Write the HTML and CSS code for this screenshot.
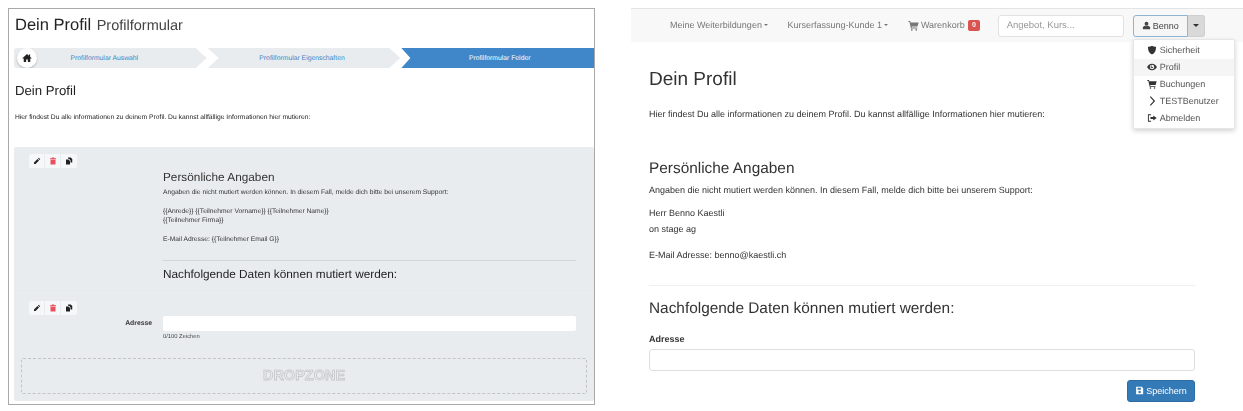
FILE: index.html
```html
<!DOCTYPE html>
<html lang="de">
<head>
<meta charset="utf-8">
<title>Dein Profil</title>
<link rel="stylesheet" href="styles.css">
</head>
<body>
<svg class="sprite" aria-hidden="true">
  <symbol id="i-home" viewBox="0 0 16 16"><path d="M8 1.5 0.6 8.2 1.6 9.3 2.8 8.2V14.5H6.6V10.4H9.4V14.5H13.2V8.2L14.4 9.3 15.4 8.2 13 6V2.2H11V4.2Z"/></symbol>
  <symbol id="i-pencil" viewBox="0 0 16 16"><path d="M11.5 1.5 14.5 4.5 13 6 10 3ZM9 4 12 7 5 14H2V11Z"/></symbol>
  <symbol id="i-trash" viewBox="0 0 16 16"><path d="M5.5 1H10.5V2.5H14V4.5H2V2.5H5.5ZM3 5.5H13V15H3Z"/></symbol>
  <symbol id="i-copy" viewBox="0 0 16 16"><path d="M6 1H11.5L14.5 4V11H11V6.5L8 3.5H6ZM2 5H7L10 8V15H2Z"/></symbol>
  <symbol id="i-cart" viewBox="0 0 16 16"><path d="M0.5 1.5H3.2L3.7 3.5H15.5L13.8 9.5H5.2L5.5 11H13.5V12.5H4.2L2.2 3H0.5ZM5.5 13A1.3 1.3 0 1 1 5.5 15.6 1.3 1.3 0 0 1 5.5 13ZM12 13A1.3 1.3 0 1 1 12 15.6 1.3 1.3 0 0 1 12 13Z"/></symbol>
  <symbol id="i-user" viewBox="0 0 16 16"><path d="M8 1.5A3.4 3.4 0 1 1 8 8.3 3.4 3.4 0 0 1 8 1.5ZM5.5 8.6C6.8 9.5 9.2 9.5 10.5 8.6 12.5 9 14.5 10.2 14.5 12.2V14.5H1.5V12.2C1.5 10.2 3.5 9 5.5 8.6Z"/></symbol>
  <symbol id="i-shield" viewBox="0 0 16 16"><path d="M8 1C10 2.2 12 2.6 14.5 2.6 14.5 8.5 13 12.5 8 15.2 3 12.5 1.5 8.5 1.5 2.6 4 2.6 6 2.2 8 1Z"/></symbol>
  <symbol id="i-eye" viewBox="0 0 16 16"><path fill-rule="evenodd" d="M8 2.8C11.6 2.8 14.6 5.2 15.8 8 14.6 10.8 11.6 13.2 8 13.2 4.4 13.2 1.4 10.8 0.2 8 1.4 5.2 4.4 2.8 8 2.8ZM8 4.4A3.6 3.6 0 1 0 8 11.6 3.6 3.6 0 0 0 8 4.4ZM8 5.8 6.4 8.6 9.8 7.4A2 2 0 1 1 8 5.8Z"/></symbol>
  <symbol id="i-chevron" viewBox="0 0 16 16"><path d="M4.6 1.6 6 0.4 13 8 6 15.6 4.6 14.4 10.4 8Z"/></symbol>
  <symbol id="i-out" viewBox="0 0 16 16"><path d="M6.5 2V3.5H3V12.5H6.5V14H1.5V2ZM10 4 15.5 8 10 12V9.6H5.5V6.4H10Z"/></symbol>
  <symbol id="i-save" viewBox="0 0 16 16"><path fill-rule="evenodd" d="M2 1.5H12L14.5 4V14.5H2ZM4.5 3V6.5H10.5V3ZM8.2 8.5A2.2 2.2 0 1 0 8.2 12.9 2.2 2.2 0 0 0 8.2 8.5Z"/></symbol>
</svg>

<div class="screen">
  <section class="editor">
    <h1 class="ed-title">Dein Profil <small>Profilformular</small></h1>
    <nav class="steps">
      <a class="step step-first"><span class="home"><svg class="ic"><use href="#i-home"/></svg></span><span class="step-label">Profilformular Auswahl</span></a>
      <a class="step step-mid"><span class="step-label">Profilformular Eigenschaften</span></a>
      <a class="step step-active"><span class="step-label">Profilformular Felder</span></a>
    </nav>
    <h2 class="ed-h2">Dein Profil</h2>
    <p class="ed-intro">Hier findest Du alle informationen zu deinem Profil. Du kannst allfällige Informationen hier mutieren:</p>
    <div class="canvas">
      <div class="block block-text">
        <div class="tools"><span class="tool"><svg class="ic"><use href="#i-pencil"/></svg></span><span class="tool tool-red"><svg class="ic"><use href="#i-trash"/></svg></span><span class="tool"><svg class="ic"><use href="#i-copy"/></svg></span></div>
        <div class="block-body">
          <h3 class="ed-h3">Persönliche Angaben</h3>
          <p class="ed-p">Angaben die nicht mutiert werden können. In diesem Fall, melde dich bitte bei unserem Support:</p>
          <p class="ed-p ed-gap">{{Anrede}} {{Teilnehmer Vorname}} {{Teilnehmer Name}}<br>{{Teilnehmer Firma}}</p>
          <p class="ed-p ed-gap">E-Mail Adresse: {{Teilnehmer Email G}}</p>
          <hr class="ed-hr">
          <h3 class="ed-h3b">Nachfolgende Daten können mutiert werden:</h3>
        </div>
      </div>
      <div class="block block-field">
        <div class="tools"><span class="tool"><svg class="ic"><use href="#i-pencil"/></svg></span><span class="tool tool-red"><svg class="ic"><use href="#i-trash"/></svg></span><span class="tool"><svg class="ic"><use href="#i-copy"/></svg></span></div>
        <div class="field-row">
          <label class="ed-label">Adresse</label>
          <div class="ed-input"></div>
        </div>
        <div class="ed-count">0/100 Zeichen</div>
      </div>
      <div class="dropwrap"><div class="dropzone">DROPZONE</div></div>
    </div>
  </section>

  <section class="site">
    <header class="navbar">
      <a class="nav-item nav-first">Meine Weiterbildungen<i class="caret"></i></a>
      <a class="nav-item nav-second">Kurserfassung-Kunde 1<i class="caret"></i></a>
      <a class="nav-item nav-third"><svg class="ic ic-cart"><use href="#i-cart"/></svg>Warenkorb<span class="badge">0</span></a>
      <div class="search">Angebot, Kurs...</div>
      <div class="usergroup">
        <button class="userbtn"><svg class="ic"><use href="#i-user"/></svg>Benno</button>
        <button class="usercaret"><i class="caret caret-dark"></i></button>
        <ul class="menu">
          <li><svg class="ic"><use href="#i-shield"/></svg>Sicherheit</li>
          <li class="menu-on"><svg class="ic"><use href="#i-eye"/></svg>Profil</li>
          <li><svg class="ic"><use href="#i-cart"/></svg>Buchungen</li>
          <li><svg class="ic"><use href="#i-chevron"/></svg>TESTBenutzer</li>
          <li><svg class="ic"><use href="#i-out"/></svg>Abmelden</li>
        </ul>
      </div>
    </header>
    <main class="content">
      <h1 class="s-title">Dein Profil</h1>
      <p class="s-p s-intro">Hier findest Du alle informationen zu deinem Profil. Du kannst allfällige Informationen hier mutieren:</p>
      <h2 class="s-h2">Persönliche Angaben</h2>
      <p class="s-p s-after">Angaben die nicht mutiert werden können. In diesem Fall, melde dich bitte bei unserem Support:</p>
      <p class="s-p s-block">Herr Benno Kaestli<br>on stage ag</p>
      <p class="s-p s-block2">E-Mail Adresse: benno@kaestli.ch</p>
      <hr class="s-hr">
      <h2 class="s-h2b">Nachfolgende Daten können mutiert werden:</h2>
      <label class="s-label">Adresse</label>
      <div class="s-input"></div>
      <div class="s-actions"><button class="s-save"><svg class="ic"><use href="#i-save"/></svg>Speichern</button></div>
    </main>
  </section>
</div>
</body>
</html>
```
FILE: styles.css
```css
* { box-sizing: border-box; }
html, body { margin: 0; padding: 0; background: #fff; }
body { width: 1243px; height: 411px; overflow: hidden; font-family: "Liberation Sans", Arial, sans-serif; color: #333; text-rendering: geometricPrecision; }
.sprite { display: none; }
.ic { width: 1em; height: 1em; fill: currentColor; display: inline-block; flex: none; }
h1, h2, h3, p, ul { margin: 0; padding: 0; font-weight: 400; }
hr { border: 0; margin: 0; }

.screen { display: flex; align-items: flex-start; padding-top: 8px; height: 411px; filter: blur(0.3px); }

/* left: form editor */
.editor { width: 587px; height: 397px; margin-left: 8px; border: 1px solid #a9a9a9; padding: 0 0 3px 5px; display: flex; flex-direction: column; }
.ed-title { font-size: 16.5px; line-height: 22px; margin-top: 5px; padding-left: 1px; color: #222; }
.ed-title small { font-size: 14.5px; color: #444; margin-left: 1px; }
.steps { display: flex; gap: 1px; margin-top: 11px; height: 20px; }
.step { flex: 1; position: relative; display: flex; align-items: center; justify-content: center; font-size: 6.8px; color: #3d86c6; background: #e9ecef; clip-path: polygon(0 0, calc(100% - 11px) 0, 100% 50%, calc(100% - 11px) 100%, 0 100%, 11px 50%); }
.step-first { clip-path: polygon(0 0, calc(100% - 11px) 0, 100% 50%, calc(100% - 11px) 100%, 0 100%); border-radius: 3px 0 0 3px; }
.step-active { background: #3f87c8; color: #fff; clip-path: polygon(0 0, 100% 0, 100% 100%, 0 100%, 9px 50%); }
.step-first .step-label { margin-left: -12px; }
.step-mid .step-label { margin-left: -4px; }
.step-active .step-label { margin-left: 4px; }
.home { position: absolute; left: 3px; top: 0; width: 20px; height: 20px; border-radius: 50%; background: #fff; box-shadow: 0 1px 2px rgba(0,0,0,.25); display: flex; align-items: center; justify-content: center; font-size: 10px; color: #222; }
.ed-h2 { font-size: 13.2px; line-height: 17px; margin-top: 14px; padding-left: 1px; color: #222; }
.ed-intro { font-size: 6.72px; line-height: 9px; margin-top: 14px; padding-left: 1px; color: #222; }
.canvas { margin-top: 25px; background: #e9ecef; border-radius: 2px; flex: 1; display: flex; flex-direction: column; }
.block { position: relative; border-bottom: 1px solid #ebedf0; }
.block-text { height: 147px; }
.block-field { height: 57px; }
.tools { position: absolute; left: 15px; top: 7px; display: flex; background: #f6f7f8; border-radius: 2px; height: 14px; }
.tool { width: 16px; display: flex; align-items: center; justify-content: center; font-size: 8px; color: #222; border-right: 1px solid #e9ecef; }
.tool:last-child { border-right: 0; }
.tool-red { color: #e8505f; }
.block-body { padding: 22px 18px 0 149px; }
.ed-h3 { font-size: 11.8px; line-height: 16px; color: #333; }
.ed-p { font-size: 6.7px; line-height: 9.5px; margin-top: 3px; color: #333; }
.ed-gap { margin-top: 9px; }
.ed-hr { border-top: 1px solid #d3d6d9; margin-top: 16px; }
.ed-h3b { font-size: 11.8px; line-height: 16px; margin-top: 5px; color: #222; }
.field-row { display: flex; align-items: center; padding: 22px 18px 0 0; }
.ed-label { width: 138px; text-align: right; font-size: 6.8px; font-weight: 700; color: #333; }
.ed-input { margin-left: 11px; flex: 1; height: 15px; background: #fff; border-radius: 2px; }
.ed-count { margin: 2px 0 0 149px; font-size: 5.8px; line-height: 8px; color: #444; }
.dropwrap { flex: 1; padding: 7px; }
.dropzone { height: 36px; border: 1px dashed #c4c4c4; border-radius: 2px; display: flex; align-items: center; justify-content: center; font-size: 14.5px; font-weight: 700; color: #e9ecef; -webkit-text-stroke: 0.8px #c4c6c8; }

/* right: live site */
.site { width: 612px; margin-left: 36px; }
.navbar { height: 34px; background: #f8f8f8; border-top: 1px solid #e4e4e4; display: flex; align-items: center; font-size: 9px; color: #777; padding-left: 39px; }
.nav-item { display: flex; align-items: center; white-space: nowrap; margin-top: -1px; }
.nav-second { margin-left: 19.5px; }
.nav-third { margin-left: 20px; }
.caret { display: inline-block; width: 0; height: 0; margin-left: 2px; border-top: 2.5px solid #777; border-left: 2.5px solid transparent; border-right: 2.5px solid transparent; }
.caret-dark { border-top: 3px solid #333; border-left: 3.5px solid transparent; border-right: 3.5px solid transparent; margin: 0; }
.ic-cart { margin-right: 2px; font-size: 11px; }
.badge { margin-left: 3.5px; width: 11.5px; height: 11px; background: #d9534f; color: #fff; font-size: 7px; font-weight: 700; border-radius: 2px; display: flex; align-items: center; justify-content: center; }
.search { margin-left: 18px; width: 126px; height: 22px; background: #fff; border: 1px solid #e2e2e2; border-radius: 3px; padding-left: 8px; line-height: 19px; color: #999; font-size: 9.5px; }
.usergroup { position: relative; display: flex; margin-left: 9px; height: 22px; }
button { font: inherit; margin: 0; }
.userbtn { width: 55px; background: #f6f6f6; border: 1px solid #8fb4d4; border-radius: 3px 0 0 3px; color: #444; display: flex; align-items: center; justify-content: center; gap: 2px; padding: 0; }
.usercaret { width: 17px; background: #d9d9d9; border: 1px solid #cfcfcf; border-left: 0; border-radius: 0 3px 3px 0; display: flex; align-items: center; justify-content: center; padding: 0; }
.menu { position: absolute; z-index: 2; left: 0; top: 24px; width: 102px; height: 90px; list-style: none; background: #fff; border: 1px solid #e6e6e6; border-radius: 2px; box-shadow: 0 2px 5px rgba(0,0,0,.18); padding: 2px 0; color: #555; }
.menu li { height: 17px; display: flex; align-items: center; gap: 3px; padding-left: 13px; }
.menu .ic { font-size: 10px; color: #333; }
.menu-on { background: #f5f5f5; }

.content { padding: 0 48px 0 18px; }
.s-title { font-size: 19px; line-height: 23px; margin-top: 26px; color: #333; }
.s-p { font-size: 9px; line-height: 15.7px; color: #333; }
.s-intro { margin-top: 16px; }
.s-h2 { font-size: 15.4px; line-height: 18px; margin-top: 37px; }
.s-after { margin-top: 5px; }
.s-block { margin-top: 8px; }
.s-block2 { margin-top: 10px; }
.s-hr { border-top: 1px solid #f0f0f0; margin-top: 21px; }
.s-h2b { font-size: 15.4px; line-height: 18px; margin-top: 14px; }
.s-label { display: block; font-size: 9px; font-weight: 700; line-height: 12px; margin-top: 15px; }
.s-input { height: 22px; margin-top: 4px; background: #fff; border: 1px solid #ddd; border-radius: 3px; }
.s-actions { display: flex; justify-content: flex-end; margin-top: 9px; }
.s-save { width: 68px; height: 22px; background: #337ab7; border: 1px solid #2e6da4; border-radius: 3px; color: #fff; font-size: 9px; display: flex; align-items: center; justify-content: center; gap: 2px; padding: 0; }
```
